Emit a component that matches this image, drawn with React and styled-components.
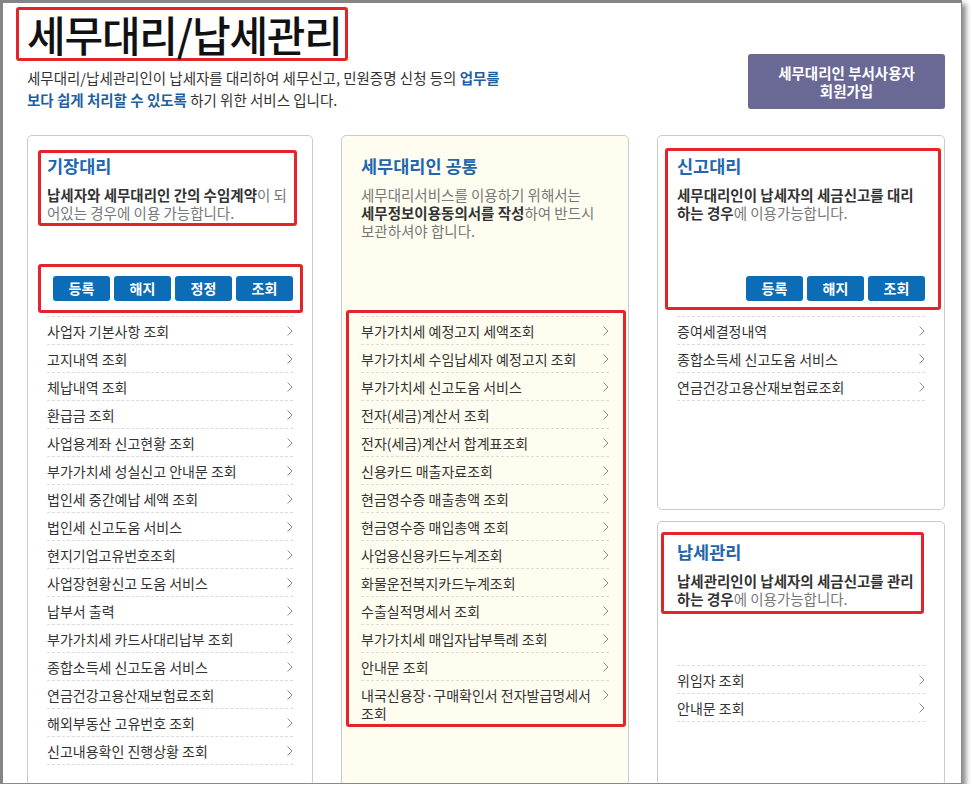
import React from 'react';
import styled, { createGlobalStyle } from 'styled-components';

const GlobalStyle = createGlobalStyle`
  html, body { margin: 0; padding: 0; background: #fff; }
  body { font-family: "Noto Sans CJK KR", "Noto Sans", sans-serif; color: #333; }
  * { box-sizing: border-box; }
`;

const Window = styled.div`
  width: 962px;
  height: 784px;
  border-top: 3px solid #858585;
  border-left: 3px solid #858585;
  border-right: 1px solid #8a8a8a;
  border-bottom: 1px solid #8a8a8a;
  box-shadow: 4px 4px 5px rgba(0, 0, 0, 0.45);
  overflow: hidden;
  background: #fff;
`;

const Page = styled.div`
  padding: 4px 16px 0 24px;
`;

const Header = styled.header`
  display: flex;
  justify-content: space-between;
  align-items: flex-end;
`;

const HeaderText = styled.div`
  display: flex;
  flex-direction: column;
  align-items: flex-start;
`;

const Title = styled.h1`
  margin: 0 0 0 -11px;
  display: inline-block;
  border: 3px solid #e3242b;
  border-radius: 3px;
  padding: 0 3px 0 8px;
  font-size: 42px;
  line-height: 48px;
  font-weight: 500;
  letter-spacing: -1.2px;
  color: #111;
`;

const Lead = styled.p`
  margin: 6px 0 0;
  font-size: 14.5px;
  line-height: 22px;
  color: #333;
  white-space: nowrap;
`;

const LeadEm = styled.strong`
  color: #1f5f9f;
  font-weight: 700;
`;

const JoinButton = styled.button`
  width: 197px;
  height: 55px;
  margin-bottom: 2px;
  border: 0;
  border-radius: 3px;
  background: #6a6996;
  color: #fff;
  font-family: inherit;
  font-size: 14.5px;
  font-weight: 700;
  line-height: 18px;
  text-align: center;
  padding: 0;
`;

const Grid = styled.div`
  margin-top: 24px;
  display: grid;
  grid-template-columns: 286px 288px 288px;
  column-gap: 28px;
  align-items: stretch;
`;

const Column = styled.div`
  display: flex;
  flex-direction: column;
  gap: 11px;
`;

const Card = styled.section`
  border: 1px solid #cbcbcb;
  border-radius: 5px;
  background: ${p => (p.$cream ? '#fffdf0' : '#fff')};
  padding: 18px 19px 20px;
  display: flex;
  flex-direction: column;
  min-height: ${p => p.$minH || 0}px;
  flex: ${p => (p.$grow ? 1 : 'none')};
`;

const CardHead = styled.div`
  height: ${p => p.$h}px;
  padding-bottom: 15px;
  display: flex;
  flex-direction: column;
`;

const Marked = styled.div`
  position: relative;
  margin-top: ${p => (p.$push ? 'auto' : '0')};
  &::after {
    content: '';
    position: absolute;
    inset: ${p => p.$inset};
    border: 3px solid #e3242b;
    border-radius: 3px;
    pointer-events: none;
  }
`;

const CardTitle = styled.h2`
  margin: 0;
  font-size: 17.5px;
  line-height: 24px;
  font-weight: 700;
  color: #2366ad;
`;

const CardDesc = styled.p`
  margin: 8px 0 0;
  font-size: 14.5px;
  line-height: 18px;
  color: #777;
  white-space: nowrap;
`;

const DescStrong = styled.strong`
  color: #333;
  font-weight: 700;
`;

const ButtonRow = styled.div`
  display: flex;
  justify-content: flex-end;
  gap: 4px;
  margin-top: ${p => (p.$push ? 'auto' : '0')};
`;

const ActionButton = styled.button`
  width: 57px;
  height: 25px;
  border: 0;
  border-radius: 3px;
  background: #0d6cb6;
  color: #fff;
  font-family: inherit;
  font-size: 14px;
  font-weight: 700;
  line-height: 25px;
  padding: 0;
`;

const List = styled.ul`
  list-style: none;
  margin: 0;
  padding: 0;
  border-top: 1px dashed #dcdcdc;
`;

const Item = styled.li`
  display: flex;
  align-items: flex-start;
  justify-content: space-between;
  gap: 8px;
  padding: 5px 0 4px;
  border-bottom: 1px dashed #dcdcdc;
  font-size: 14px;
  line-height: 18px;
  color: #333;
`;

const ItemLabel = styled.span`
  flex: 1;
`;

const ChevronIcon = styled.svg`
  flex: none;
  margin-top: 4px;
`;

const Chevron = () => (
  <ChevronIcon width="6" height="10" viewBox="0 0 6 10">
    <polyline points="0.5,0.5 5,5 0.5,9.5" fill="none" stroke="#8c8c8c" strokeWidth="1" />
  </ChevronIcon>
);

const LinkList = ({ items }) => (
  <List>
    {items.map(t => (
      <Item key={t}>
        <ItemLabel>{t}</ItemLabel>
        <Chevron />
      </Item>
    ))}
  </List>
);

const leftItems = [
  '사업자 기본사항 조회',
  '고지내역 조회',
  '체납내역 조회',
  '환급금 조회',
  '사업용계좌 신고현황 조회',
  '부가가치세 성실신고 안내문 조회',
  '법인세 중간예납 세액 조회',
  '법인세 신고도움 서비스',
  '현지기업고유번호조회',
  '사업장현황신고 도움 서비스',
  '납부서 출력',
  '부가가치세 카드사대리납부 조회',
  '종합소득세 신고도움 서비스',
  '연금건강고용산재보험료조회',
  '해외부동산 고유번호 조회',
  '신고내용확인 진행상황 조회',
];

const middleItems = [
  '부가가치세 예정고지 세액조회',
  '부가가치세 수임납세자 예정고지 조회',
  '부가가치세 신고도움 서비스',
  '전자(세금)계산서 조회',
  '전자(세금)계산서 합계표조회',
  '신용카드 매출자료조회',
  '현금영수증 매출총액 조회',
  '현금영수증 매입총액 조회',
  '사업용신용카드누계조회',
  '화물운전복지카드누계조회',
  '수출실적명세서 조회',
  '부가가치세 매입자납부특례 조회',
  '안내문 조회',
  '내국신용장·구매확인서 전자발급명세서 조회',
];

const rightItems = ['증여세결정내역', '종합소득세 신고도움 서비스', '연금건강고용산재보험료조회'];
const payItems = ['위임자 조회', '안내문 조회'];

export default function App() {
  return (
    <>
      <GlobalStyle />
      <Window>
        <Page>
          <Header>
            <HeaderText>
              <Title>세무대리/납세관리</Title>
              <Lead>
                세무대리/납세관리인이 납세자를 대리하여 세무신고, 민원증명 신청 등의 <LeadEm>업무를</LeadEm>
                <br />
                <LeadEm>보다 쉽게 처리할 수 있도록</LeadEm> 하기 위한 서비스 입니다.
              </Lead>
            </HeaderText>
            <JoinButton>
              세무대리인 부서사용자
              <br />
              회원가입
            </JoinButton>
          </Header>

          <Grid>
            <Card>
              <CardHead $h={162}>
                <Marked $inset="-4px -4px -4px -9px">
                  <CardTitle>기장대리</CardTitle>
                  <CardDesc>
                    <DescStrong>납세자와 세무대리인 간의 수임계약</DescStrong>이 되
                    <br />
                    어있는 경우에 이용 가능합니다.
                  </CardDesc>
                </Marked>
                <Marked $push $inset="-12px -10px -12px -9px">
                  <ButtonRow>
                    <ActionButton>등록</ActionButton>
                    <ActionButton>해지</ActionButton>
                    <ActionButton>정정</ActionButton>
                    <ActionButton>조회</ActionButton>
                  </ButtonRow>
                </Marked>
              </CardHead>
              <LinkList items={leftItems} />
            </Card>

            <Card $cream>
              <CardHead $h={162}>
                <CardTitle>세무대리인 공통</CardTitle>
                <CardDesc>
                  세무대리서비스를 이용하기 위해서는
                  <br />
                  <DescStrong>세무정보이용동의서를 작성</DescStrong>하여 반드시
                  <br />
                  보관하셔야 합니다.
                </CardDesc>
              </CardHead>
              <Marked $inset="-6px -17px 0 -15px">
                <LinkList items={middleItems} />
              </Marked>
            </Card>

            <Column>
              <Card $minH={375}>
                <Marked $inset="-6px -16px 6px -12px">
                  <CardHead $h={162}>
                    <CardTitle>신고대리</CardTitle>
                    <CardDesc>
                      <DescStrong>세무대리인이 납세자의 세금신고를 대리</DescStrong>
                      <br />
                      <DescStrong>하는 경우</DescStrong>에 이용가능합니다.
                    </CardDesc>
                    <ButtonRow $push>
                      <ActionButton>등록</ActionButton>
                      <ActionButton>해지</ActionButton>
                      <ActionButton>조회</ActionButton>
                    </ButtonRow>
                  </CardHead>
                </Marked>
                <LinkList items={rightItems} />
              </Card>
              <Card $grow>
                <CardHead $h={125}>
                  <Marked $inset="-8px 1px -6px -16px">
                    <CardTitle>납세관리</CardTitle>
                    <CardDesc>
                      <DescStrong>납세관리인이 납세자의 세금신고를 관리</DescStrong>
                      <br />
                      <DescStrong>하는 경우</DescStrong>에 이용가능합니다.
                    </CardDesc>
                  </Marked>
                </CardHead>
                <LinkList items={payItems} />
              </Card>
            </Column>
          </Grid>
        </Page>
      </Window>
    </>
  );
}
